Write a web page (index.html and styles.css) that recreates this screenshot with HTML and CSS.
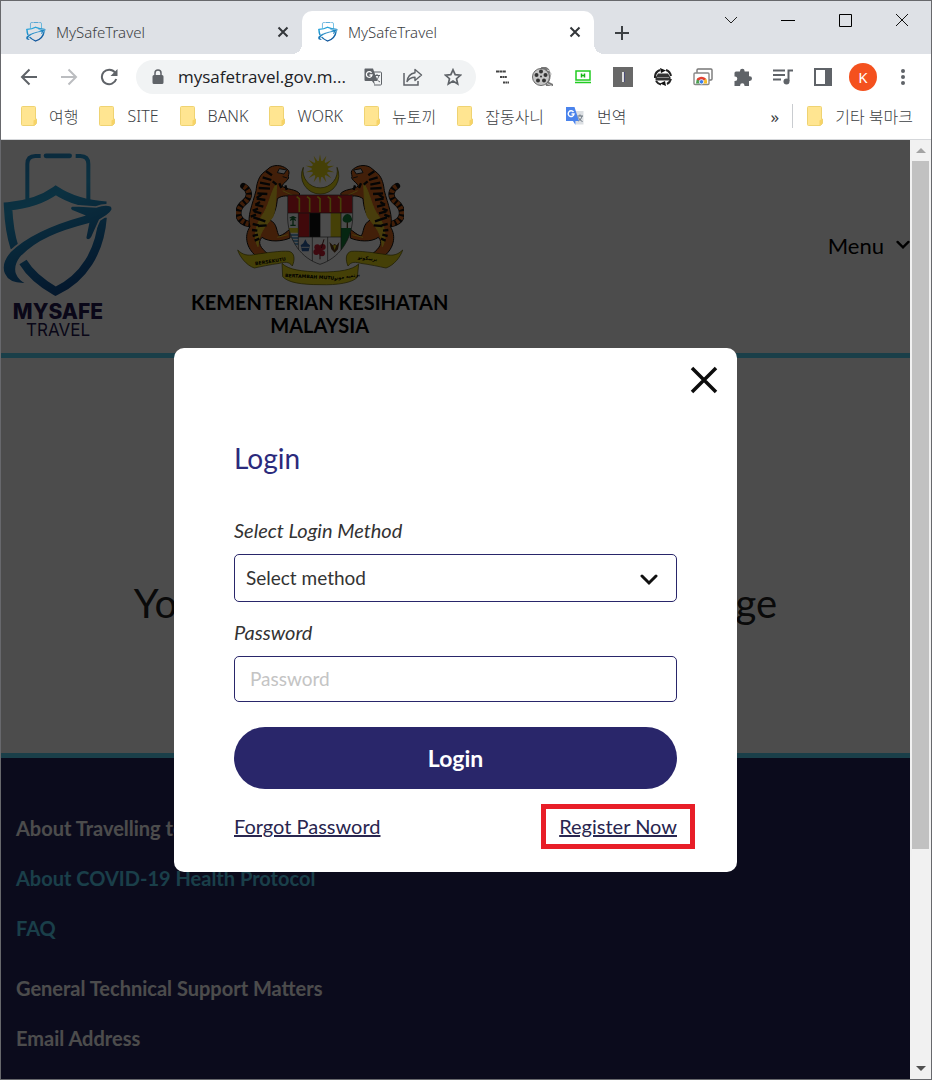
FILE: index.html
```html
<!DOCTYPE html>
<html lang="ko">
<head>
    <meta charset="UTF-8">
    <meta name="viewport" content="width=device-width, initial-scale=1.0">
    <title>MySafeTravel</title>
    <link rel="stylesheet" href="styles.css">
</head>
<body>
    <!-- shared symbols -->
    <svg class="symbols" aria-hidden="true">
        <defs>
            <linearGradient id="logoBlue" gradientUnits="userSpaceOnUse" x1="40" y1="60" x2="200" y2="460">
                <stop offset="0" stop-color="#2388c8"/>
                <stop offset="0.35" stop-color="#26a4da"/>
                <stop offset="1" stop-color="#0e4f96"/>
            </linearGradient>
        </defs>
        <symbol id="logo" viewBox="9 44 330 438" preserveAspectRatio="none">
            <g fill="none" stroke="url(#logoBlue)">
                <path stroke-width="12" d="M82 186V80q0-24 24-24h16M227 56h14q24 0 24 24v110"/>
                <path stroke-width="14" stroke-linecap="round" d="M138 55.500h71"/>
                <path stroke-width="25" d="M44 332C30 290 26 250 24 207c60-5 104-20 143-48 42 28 92 42 152 46M308 240c-8 104-58 184-141 222-42-24-74-48-98-88"/>
            </g>
            <path fill="url(#logoBlue)" stroke="#fff" stroke-width="5" d="M216 220c-8-5-8-15 8-15l64 4c16-6 32-8 44-4 10 8 4 20-12 30l-21 13-23 51c-5 12-20 12-19 0l8-39C180 282 110 308 62 360c-28 38-10 64 20 79-78 6-90-52-52-96 52-52 130-84 220-109z"/>
        </symbol>
        <symbol id="folder" viewBox="0 0 16 20">
            <path fill="#ffe591" stroke="#efd372" d="M1.500.5h12a1 1 0 0 1 1 1V13h1v4.500l-2 2h-12a1 1 0 0 1-1-1v-17a1 1 0 0 1 1-1z"/>
            <path fill="#f7d366" d="M12.500 14.500l2.500-1.500v4.500l-1.500 1.500h-1z"/>
        </symbol>
        <symbol id="close" viewBox="0 0 12 12">
            <path d="M1.500 1.500l9 9m0-9l-9 9" fill="none" stroke="#33363a" stroke-width="2"/>
        </symbol>
        <symbol id="chevron" viewBox="0 0 18 12">
            <path d="M2 2l7 7 7-7" fill="none" stroke="currentColor" stroke-width="3" stroke-linecap="round"/>
        </symbol>
    </svg>

    <div class="window">
        <div class="tab-strip">
            <div class="tab">
                <svg class="tab-icon"><use href="#logo"/></svg>
                <span class="tab-title">MySafeTravel</span>
                <button class="tab-close" aria-label="탭 닫기"><svg width="12" height="12"><use href="#close"/></svg></button>
            </div>
            <div class="tab tab-active">
                <svg class="tab-icon"><use href="#logo"/></svg>
                <span class="tab-title">MySafeTravel</span>
                <button class="tab-close" aria-label="탭 닫기"><svg width="12" height="12"><use href="#close"/></svg></button>
            </div>
            <button class="new-tab" aria-label="새 탭">
                <svg width="16" height="16" viewBox="0 0 16 16"><path d="M8 1v14M1 8h14" stroke="#3c4043" stroke-width="2"/></svg>
            </button>
            <div class="window-controls">
                <button aria-label="탭 검색"><svg width="14" height="14" viewBox="0 0 14 14"><path d="M1 4l6 6 6-6" fill="none" stroke="#222"/></svg></button>
                <button aria-label="최소화"><svg width="14" height="14" viewBox="0 0 14 14"><path d="M0 7.500h14" stroke="#000"/></svg></button>
                <button aria-label="최대화"><svg width="14" height="14" viewBox="0 0 14 14"><path d="M1.500 1.500h12v12h-12z" fill="none" stroke="#000"/></svg></button>
                <button aria-label="닫기"><svg width="14" height="14" viewBox="0 0 14 14"><path d="M1 1l12 12M13 1L1 13" fill="none" stroke="#111"/></svg></button>
            </div>
        </div>

        <div class="toolbar">
            <button class="tool" aria-label="뒤로"><svg width="18" height="18" viewBox="0 0 18 18"><path d="M17 9H2m7.500-7.500L2 9l7.500 7.500" fill="none" stroke="#5f6368" stroke-width="2"/></svg></button>
            <button class="tool" aria-label="앞으로"><svg width="18" height="18" viewBox="0 0 18 18"><path d="M1 9h15M8.500 1.500L16 9l-7.500 7.500" fill="none" stroke="#bbbdc0" stroke-width="2"/></svg></button>
            <button class="tool" aria-label="새로고침"><svg width="18" height="18" viewBox="0 0 18 18"><path d="M15 4.500A7.300 7.300 0 1 0 16.200 11" fill="none" stroke="#5f6368" stroke-width="2"/><path d="M17.500 1v7h-7z" fill="#5f6368"/></svg></button>

            <div class="omnibox">
                <svg width="12" height="16" viewBox="0 0 12 16"><path d="M2 6h8a1.500 1.500 0 0 1 1.500 1.500v6A1.500 1.500 0 0 1 10 15H2a1.500 1.500 0 0 1-1.500-1.500v-6A1.500 1.500 0 0 1 2 6z" fill="#5f6368"/><path d="M3 7V4a3 3 0 0 1 6 0v3" fill="none" stroke="#5f6368" stroke-width="1.500"/></svg>
                <input class="address" type="text" aria-label="주소" value="mysafetravel.gov.m...">
                <button class="tool" aria-label="번역">
                    <svg width="18" height="18" viewBox="0 0 18 18"><path d="M8 4h8.500a1 1 0 0 1 1 1v11a1 1 0 0 1-1 1H10" fill="none" stroke="#5f6368"/><path d="M1 .5h8L13.500 13H10l1 4-3-4H1.500a1 1 0 0 1-1-1V1z" fill="#5f6368"/><path d="M7.500 4.800A2.800 2.800 0 1 0 8 7H5.500" fill="none" stroke="#fff" stroke-width="1.300"/><path d="M10.500 7.500H16M13 6v1.500m2 0c-.5 2.500-2 4-3.500 5M11.500 9c1 2 2.500 4 4.500 5" fill="none" stroke="#5f6368"/></svg>
                </button>
                <button class="tool" aria-label="공유">
                    <svg width="20" height="18" viewBox="0 0 20 18"><path d="M1 5v12h14v-4" fill="none" stroke="#5f6368" stroke-width="1.500"/><path d="M12 1.500l6.500 5.500-6.500 5.500V9.300c-3.500 0-6 1.200-8 4.200.5-4.500 3.500-8 8-8.800z" fill="none" stroke="#5f6368" stroke-width="1.400" stroke-linejoin="round"/></svg>
                </button>
                <button class="tool" aria-label="북마크에 추가">
                    <svg width="18" height="18" viewBox="0 0 18 18"><path d="M9 1.800l2.200 4.900 5.300.5-4 3.500 1.200 5.200L9 13.100l-4.700 2.800 1.200-5.200-4-3.500 5.300-.5z" fill="none" stroke="#5f6368" stroke-width="1.700"/></svg>
                </button>
            </div>

            <button class="tool" aria-label="Enable right click">
                <svg width="16" height="16" viewBox="0 0 16 16"><g stroke="#444" stroke-width="2"><path d="M1 2.500h10" stroke-dasharray="3 .4"/><path d="M5 8h7" stroke-dasharray="2 .4"/><path d="M8 13.500h6" stroke-dasharray="2 .4"/></g></svg>
            </button>
            <button class="tool" aria-label="비디오">
                <svg width="22" height="22" viewBox="0 0 22 22"><path d="M9 1h5c5 2 6 9 3 15l4 2v2h-7z" fill="#777"/><path d="M15 4l3 1M17 8h3M17 12h2M14 17l6 3" stroke="#ccc"/><circle cx="9" cy="11" r="8.500" fill="#c5c5c5" stroke="#666"/><g fill="#333"><circle cx="9" cy="5.500" r="2"/><circle cx="4.500" cy="9" r="2"/><circle cx="6" cy="14.500" r="2"/><circle cx="12" cy="14.500" r="2"/><circle cx="13.500" cy="9" r="2"/><circle cx="9" cy="10.500" r="1"/></g></svg>
            </button>
            <button class="tool" aria-label="화면">
                <svg width="16" height="14" viewBox="0 0 16 14"><path d="M1 1h14v9H1zM0 12.500h16" fill="none" stroke="#22cc22" stroke-width="1.500"/><path d="M6.500 3.500v4m3-4v4m-3-2h3" stroke="#13b513" stroke-width="1.500"/></svg>
            </button>
            <button class="tool" aria-label="확장 프로그램 I">
                <svg width="20" height="20" viewBox="0 0 20 20"><path d="M0 0h20v20H0z" fill="#686868"/><path d="M10 5v10" stroke="#ddd" stroke-width="2"/><path d="M11.500 5v10" stroke="#4b4c78"/></svg>
            </button>
            <button class="tool" aria-label="회전">
                <svg width="18" height="18" viewBox="0 0 18 18"><path d="M1 10A8 8 0 0 1 6 2M12 2a8 8 0 0 1 5 6M17 11a8 8 0 0 1-4 5M7 16.500A8 8 0 0 1 2 13" fill="none" stroke="#222" stroke-width="2"/><path d="M6 0l6 2.500L7 5zM12 18l-6-2.500 5-2.500z" fill="#111"/><path d="M4 5.500h10l2.500 4v3h-15v-3z" fill="#333"/><path d="M3 9.500h12" stroke="#888"/></svg>
            </button>
            <button class="tool" aria-label="원격 데스크톱">
                <svg width="20" height="18" viewBox="0 0 20 18"><rect x="4" y="1" width="15" height="11" rx="1" fill="#fff" stroke="#777" stroke-width="1.400"/><rect x="1" y="5" width="15" height="11.500" rx="1" fill="#fff" stroke="#888" stroke-width="1.400"/><path d="M3 15.500a6 6 0 0 1 2-5.500l3.500 5.500z" fill="#4a9f4f"/><path d="M3.500 11.500a6 6 0 0 1 10 0l-5 2z" fill="#e34234"/><path d="M13 10.500a6 6 0 0 1 1 5H8.500z" fill="#f6bd27"/><circle cx="8.500" cy="13.800" r="2.200" fill="#397ded" stroke="#fff" stroke-width=".8"/></svg>
            </button>
            <button class="tool" aria-label="확장 프로그램">
                <svg width="20" height="20" viewBox="0 0 20 20"><path d="M3 4.500h4V4a2.300 2.300 0 0 1 4.600 0v.5h4.400v4.800h.7a2.300 2.300 0 0 1 0 4.600H16V19h-4.500v-.5a2.200 2.200 0 0 0-4.400 0v.5H1.500v-5H2a2.300 2.300 0 0 0 0-4.600h-.5V6A1.500 1.500 0 0 1 3 4.500z" fill="#5f6368"/></svg>
            </button>
            <button class="tool" aria-label="미디어 제어">
                <svg width="20" height="18" viewBox="0 0 20 18"><path d="M0 2.500h12M0 7h12M0 11.500h8M15.500 13V2.500H20" fill="none" stroke="#5f6368" stroke-width="2"/><circle cx="13.500" cy="13.500" r="3" fill="#5f6368"/></svg>
            </button>
            <button class="tool" aria-label="측면 패널">
                <svg width="18" height="18" viewBox="0 0 18 18"><path d="M1 1h16v16H1z" fill="#fff" stroke="#5f6368" stroke-width="2"/><path d="M11 0h7v18h-7z" fill="#5f6368"/></svg>
            </button>
            <button class="tool" aria-label="프로필"><span class="avatar">K</span></button>
            <button class="tool" aria-label="메뉴">
                <svg width="4" height="18" viewBox="0 0 4 18"><g fill="#5f6368"><circle cx="2" cy="3" r="2"/><circle cx="2" cy="9" r="2"/><circle cx="2" cy="15" r="2"/></g></svg>
            </button>
        </div>

        <nav class="bookmarks">
            <a href="#"><svg class="folder"><use href="#folder"/></svg>여행</a>
            <a href="#"><svg class="folder"><use href="#folder"/></svg>SITE</a>
            <a href="#"><svg class="folder"><use href="#folder"/></svg>BANK</a>
            <a href="#"><svg class="folder"><use href="#folder"/></svg>WORK</a>
            <a href="#"><svg class="folder"><use href="#folder"/></svg>뉴토끼</a>
            <a href="#"><svg class="folder"><use href="#folder"/></svg>잡동사니</a>
            <a href="#">
                <svg width="20" height="20" viewBox="0 0 20 20"><path d="M9 5h9.500v13.500H11z" fill="#dcdfe3"/><path d="M1 1h8.500L14 15h-3.500v4L8 15H1z" fill="#4a83ec"/><path d="M8.500 6A2.900 2.900 0 1 0 9 8H6.500" fill="none" stroke="#fff" stroke-width="1.400"/><path d="M12.500 10H18M15 8.500V10m2 0c-.5 2.500-2 4-3.500 5M13.500 11.500c1 2 2 3 4 4" fill="none" stroke="#69747f"/></svg>
                번역
            </a>
            <button class="more" aria-label="북마크 더보기">»</button>
            <a class="other" href="#"><svg class="folder"><use href="#folder"/></svg>기타 북마크</a>
        </nav>

        <div class="viewport">
            <div class="page">
                <header class="site-header">
                    <a class="brand" href="#">
                        <svg width="110" height="146"><use href="#logo"/></svg>
                        <strong>MYSAFE</strong>
                        <span>TRAVEL</span>
                    </a>
                    <div class="ministry">
                        <svg width="168" height="132" viewBox="160 40 504 396" aria-hidden="true">
                            <defs>
                                <path id="ray" d="M412 41l8 44-8 44-8-44z"/>
                                <clipPath id="shieldClip"><path d="M315 163h195v72c-4 66-42 118-98 136-56-18-94-70-97-136z"/></clipPath>
                                <g id="tiger">
                                    <path d="M198 250c-40-10-38-46-12-66 20-16 14-38-4-48" fill="none" stroke="#111" stroke-width="19" stroke-linecap="round"/>
                                    <path d="M198 250c-40-10-38-46-12-66 20-16 14-38-4-48" fill="none" stroke="#d8641c" stroke-width="15" stroke-dasharray="9 6"/>
                                    <path d="M240 98l22-18c18-10 42-6 56 10 4 10-4 14 0 22-6 12-16 14-20 24 14 12 42 8 54 24l-14 14c-20-12-40-10-54 0-2 26-8 46-22 64 24 12 18 36 28 48 14-4 22-14 32-20v26c-22 10-62 14-84-2-16 16-2 34 16 48l-36 6c-24-20-36-56-16-86-10-30 8-68 18-108 2-18 6-38 20-52z" fill="#dd6a1e" stroke="#111" stroke-width="3"/>
                                    <path d="M282 128c-20 30-22 70-46 100-18 30-24 64-10 90 2-40 20-60 44-88 8-18 10-50 12-102zM300 150l34 16M284 290l32-8" fill="#f0cd28" stroke="#f0cd28" stroke-width="3"/>
                                    <path d="M250 92l18 12m-28 6l26 8m-34 8l30 6m-34 10l34 2m-38 14l30 2m-32 14l26 4m-30 14l24 6m-28 14l22 6m-24 12l18 6m-20 14l18 4m-20 14l16 2m-14 16l16-4m-10 18l14-6m40-172l12 10m8-4l6 14m12-8l4 14m-90 24l14-10m-18 30l14-8m-22 26l16-6m-22 24l16-6m4 12l24 8m-22 14l26-2" fill="none" stroke="#111" stroke-width="7"/>
                                    <path d="M290 84l22 4-8 12-20-4zM300 108l14 4" fill="#eee" stroke="#222" stroke-width="3"/>
                                </g>
                            </defs>
                            <path fill="#e8d619" stroke="#555200" stroke-width="2" d="M362 80a56 56 0 1 0 101 0 51.500 51.500 0 1 1-101 0z"/>
                            <g fill="#e8d619">
                                <use href="#ray"/>
                                <use href="#ray" transform="rotate(25.700 412 85)"/>
                                <use href="#ray" transform="rotate(51.400 412 85)"/>
                                <use href="#ray" transform="rotate(77.100 412 85)"/>
                                <use href="#ray" transform="rotate(102.900 412 85)"/>
                                <use href="#ray" transform="rotate(128.600 412 85)"/>
                                <use href="#ray" transform="rotate(154.300 412 85)"/>
                                <circle cx="412" cy="85" r="25"/>
                            </g>
                            <use href="#tiger"/>
                            <use href="#tiger" transform="translate(825 0) scale(-1 1)"/>
                            <g clip-path="url(#shieldClip)">
                                <path fill="#fff" d="M310 160h205v215H310z"/>
                                <path fill="#d51f26" d="M315 163h195v54H315zM347 217h33v72h-33z"/>
                                <path fill="#111" d="M380 217h33v72h-33z"/>
                                <path fill="#e8d619" d="M444 217h31v72h-31zM315 262h32v14h-32z"/>
                                <path fill="#16803a" d="M475 262h40v80h-40z"/>
                                <path stroke="#3c8fc8" stroke-width="4" d="M315 283h32m-32 9h32m-32 9h32m-32 9h32"/>
                                <path stroke="#176b32" stroke-width="4" fill="none" d="M331 228v26m-10-22l10-4 10 4m-18 8l8-10 8 10m-16 14h16"/>
                                <path stroke="#5b3b18" stroke-width="4" d="M494 240v22"/>
                                <path fill="#16803a" d="M494 220c10 0 12 10 14 14 4 14-30 16-28 2 0-6 6-16 14-16z"/>
                                <path stroke="#e8d619" stroke-width="5" fill="none" d="M342 168l8 6v40m23-46l8 6v40m23-46l8 6v40m23-46l8 6v40m23-46l8 6v40"/>
                                <path stroke="#333" stroke-width="2" fill="none" d="M315 217h195M347 217v120M475 217v120M347 289h128M389 289v80M435 289v80"/>
                                <path fill="#2f62a8" d="M368 296l6 12 8 6-4 18h-20l-4-18 8-6z"/>
                                <path stroke="#e9edf5" stroke-width="3" d="M356 320h24"/>
                                <g fill="#cd1f35"><circle cx="404" cy="320" r="9"/><circle cx="420" cy="319" r="9"/><circle cx="401" cy="334" r="9"/><circle cx="418" cy="338" r="9"/><circle cx="411" cy="328" r="9"/></g>
                                <path stroke="#5b1a1a" stroke-width="3" d="M416 322l8-26m-12 46v14"/>
                                <path fill="#5b3b18" d="M440 304l10 10 6-4 6 4 8-10-4 22-10 10-10-10z"/>
                                <path fill="#e8d619" d="M451 314h10l-5 14z"/>
                            </g>
                            <path fill="none" stroke="#333" stroke-width="2" d="M315 163h195v72c-4 66-42 118-98 136-56-18-94-70-97-136z"/>
                            <g fill="#e8d619" stroke="#555200" stroke-width="2">
                                <path d="M165 328c14 14 30 18 48 14 40-6 80-12 106-10 18 4 18 26 10 44-10-14-24-12-38-8-30 4-56 10-76 14-24-8-44-34-50-54z"/>
                                <path d="M660 328c-14 14-30 18-48 14-40-6-80-12-106-10-18 4-18 26-10 44 10-14 24-12 38-8 30 4 56 10 76 14 24-8 44-34 50-54z"/>
                                <path d="M298 368c20 20 60 24 114 26 60 0 96-6 116-24l-4 40c-14 16-60 24-112 22-56 0-96-6-112-24z"/>
                            </g>
                            <text class="motto" transform="translate(218 374) rotate(-9)">BERSEKUTU</text>
                            <text class="motto" transform="translate(307 409) rotate(3)">BERTAMBAH MUTU</text>
                            <text class="motto" transform="translate(525 354) rotate(7)">برسكوتو</text>
                            <text class="motto" transform="translate(454 418) rotate(-9)">برتمبه موتو</text>
                        </svg>
                        <p>KEMENTERIAN KESIHATAN<br>MALAYSIA</p>
                    </div>
                    <button class="menu-btn">Menu <svg width="14" height="10"><use href="#chevron"/></svg></button>
                </header>

                <main class="notice">
                    <h1>You need to login to access this page</h1>
                </main>

                <footer class="site-footer">
                    <h2>About Travelling to Malaysia</h2>
                    <a href="#">About COVID-19 Health Protocol</a>
                    <a href="#">FAQ</a>
                    <h2 class="support">General Technical Support Matters</h2>
                    <h2>Email Address</h2>
                </footer>

                <div class="overlay">
                    <form class="modal">
                        <button class="modal-close" type="button" aria-label="Close">
                            <svg width="28" height="28" viewBox="0 0 28 28"><path d="M2 2l24 24M26 2L2 26" stroke="#0c0c0c" stroke-width="3.500"/></svg>
                        </button>
                        <h2 class="modal-title">Login</h2>
                        <label for="method">Select Login Method</label>
                        <div class="select-wrap">
                            <select id="method">
                                <option>Select method</option>
                            </select>
                            <svg width="18" height="12"><use href="#chevron"/></svg>
                        </div>
                        <label for="password">Password</label>
                        <input class="password" id="password" type="password" placeholder="Password">
                        <button class="login-btn" type="submit">Login</button>
                        <div class="modal-links">
                            <a href="#">Forgot Password</a>
                            <a class="register" href="#">Register Now</a>
                        </div>
                    </form>
                </div>
            </div>

            <div class="scrollbar" aria-hidden="true">
                <span class="arrow arrow-up"></span>
                <span class="thumb"></span>
                <span class="track"></span>
                <span class="arrow arrow-down"></span>
            </div>
        </div>
    </div>
</body>
</html>
```
FILE: styles.css
```css
* {
    margin: 0;
    padding: 0;
    box-sizing: border-box;
}

body {
    font-family: 'Noto Sans', 'Noto Sans CJK KR', sans-serif;
    color: #3c4043;
}

button {
    border: none;
    background: none;
    font-family: inherit;
    color: inherit;
    cursor: pointer;
}

a {
    color: inherit;
    text-decoration: none;
}

svg {
    display: block;
    flex-shrink: 0;
}

.symbols {
    position: absolute;
    width: 0;
    height: 0;
}

.window {
    display: flex;
    flex-direction: column;
    min-height: 100vh;
    border: 1px solid #67686c;
    background: white;
}

/* tabs */
.tab-strip {
    display: flex;
    height: 53px;
    padding-left: 9px;
    background: #dee1e6;
}

.tab {
    position: relative;
    display: flex;
    align-items: center;
    flex: 0 1 292px;
    margin-top: 10px;
    padding: 0 10px 2px 16px;
    border-radius: 10px 10px 0 0;
    font-size: 15px;
    font-weight: 300;
}

.tab-active {
    background: white;
}

.tab-active::before,
.tab-active::after {
    content: '';
    position: absolute;
    bottom: 0;
    width: 10px;
    height: 10px;
}

.tab-active::before {
    left: -10px;
    background: radial-gradient(circle at 0 0, #dee1e6 10px, white 10px);
}

.tab-active::after {
    right: -10px;
    background: radial-gradient(circle at 100% 0, #dee1e6 10px, white 10px);
}

.tab-icon {
    width: 20px;
    height: 20px;
    margin-right: 10px;
}

.tab-title {
    flex: 1;
}

.tab-close {
    display: grid;
    place-items: center;
    width: 18px;
    height: 18px;
}

.new-tab {
    display: grid;
    place-items: center;
    width: 36px;
    margin: 10px 0 0 10px;
}

.window-controls {
    display: flex;
    height: 37px;
    margin-left: auto;
    margin-right: 1px;
}

.window-controls button {
    display: grid;
    place-items: center;
    width: 57px;
}

/* toolbar */
.toolbar {
    display: flex;
    align-items: center;
    height: 45px;
    padding: 0 8px;
}

.tool {
    display: grid;
    place-items: center;
    flex: 0 0 40px;
    height: 34px;
}

.omnibox {
    display: flex;
    align-items: center;
    flex: 1;
    min-width: 0;
    height: 34px;
    margin: 0 7px;
    padding: 0 3px 0 16px;
    border-radius: 17px;
    background: #f1f3f4;
}

.address {
    flex: 1;
    min-width: 0;
    margin-left: 14px;
    border: none;
    outline: none;
    background: none;
    font-family: 'Open Sans', sans-serif;
    font-size: 17px;
    color: #202124;
}

.avatar {
    width: 28px;
    border-radius: 50%;
    background: #f4511e;
    color: white;
    font-size: 15px;
    line-height: 28px;
}

/* bookmarks */
.bookmarks {
    display: flex;
    align-items: center;
    gap: 21px;
    height: 41px;
    padding: 0 18px 6px 20px;
    border-bottom: 1px solid #d5d7da;
    font-size: 16px;
    font-weight: 300;
    white-space: nowrap;
}

.bookmarks a {
    display: flex;
    align-items: center;
    gap: 12px;
}

.folder {
    width: 16px;
    height: 20px;
}

.more {
    margin-left: auto;
    margin-right: -8px;
    font-size: 17px;
}

.bookmarks .other {
    padding-left: 14px;
    border-left: 1px solid #c9ccd0;
}

/* web page */
.viewport {
    display: flex;
    flex: 1;
}

.page {
    position: relative;
    display: flex;
    flex-direction: column;
    flex: 1;
    font-family: Lato, 'Liberation Sans', sans-serif;
    background: white;
}

.site-header {
    display: flex;
    align-items: center;
    gap: 78px;
    height: 218px;
    padding: 0 0 3px 2px;
    border-bottom: 5px solid #57d2f5;
    color: #000;
}

.brand {
    display: flex;
    flex-direction: column;
    align-items: center;
    font-family: Inter, sans-serif;
    color: #241852;
}

.brand strong {
    margin-top: 4px;
    font-size: 21px;
    font-weight: 800;
    line-height: 20px;
}

.brand span {
    font-size: 17px;
    line-height: 16px;
}

.ministry {
    display: flex;
    flex-direction: column;
    align-items: center;
    gap: 5px;
    font-size: 20px;
    font-weight: 700;
    line-height: 23px;
    text-align: center;
}

.motto {
    font-family: 'DejaVu Sans', sans-serif;
    font-size: 14px;
    font-weight: bold;
}

.menu-btn {
    display: flex;
    align-items: center;
    gap: 12px;
    margin-left: auto;
    font-size: 22px;
}

.notice {
    display: grid;
    place-items: center;
    height: 395px;
    padding-top: 94px;
    color: #222;
}

.notice h1 {
    font-size: 40px;
    font-weight: normal;
    white-space: nowrap;
}

.site-footer {
    flex: 1;
    padding: 45px 15px 0;
    border-top: 5px solid #57d2f5;
    background: #262560;
    color: white;
    font-size: 20px;
    line-height: 50px;
}

.site-footer h2 {
    font-size: 20px;
}

.site-footer a {
    display: block;
    color: #57d2f5;
    font-weight: bold;
}

.site-footer .support {
    margin-top: 10px;
}

/* login modal */
.overlay {
    position: absolute;
    inset: 0;
    display: flex;
    align-items: center;
    justify-content: center;
    background: rgba(0, 0, 0, 0.7);
}

.modal {
    display: flex;
    flex-direction: column;
    width: 563px;
    max-width: 90%;
    padding: 18px 60px 23px;
    border-radius: 10px;
    background: white;
    color: #333;
}

.modal-close {
    align-self: flex-end;
    width: 28px;
    margin-right: -41px;
}

.modal-title {
    margin: 47px 0 39px;
    color: #2b2a7c;
    font-size: 28px;
    font-weight: normal;
    line-height: 34px;
}

.modal label {
    margin-bottom: 8px;
    font-size: 20px;
    font-style: italic;
    line-height: 32px;
}

.select-wrap {
    display: grid;
    align-items: center;
    margin-bottom: 14px;
    color: #111;
}

.select-wrap select,
.select-wrap svg {
    grid-area: 1 / 1;
}

.select-wrap svg {
    justify-self: end;
    margin-top: 4px;
    margin-right: 19px;
    pointer-events: none;
}

.select-wrap select,
.password {
    width: 100%;
    border: 1px solid #29266a;
    border-radius: 5px;
    background: white;
    color: #333;
    font-family: inherit;
    font-size: 19px;
}

.select-wrap select {
    height: 48px;
    padding-left: 11px;
    appearance: none;
}

.password {
    height: 46px;
    padding: 0 15px;
}

.password::placeholder {
    color: #c4c4c4;
}

.login-btn {
    height: 62px;
    margin-top: 25px;
    border-radius: 31px;
    background: #29266a;
    color: white;
    font-size: 23px;
    font-weight: bold;
}

.modal-links {
    display: flex;
    align-items: center;
    justify-content: space-between;
    margin: 15px -18px 0 0;
    color: #29264f;
    font-size: 20px;
}

.modal-links a {
    text-decoration: underline;
}

.modal-links .register {
    padding: 0 13px;
    border: 5px solid #e81e28;
    line-height: 35px;
}

/* scrollbar */
.scrollbar {
    display: flex;
    flex-direction: column;
    align-items: center;
    width: 21px;
    background: #f1f1f1;
}

.arrow {
    display: grid;
    place-items: center;
    height: 21px;
}

.arrow::before {
    content: '';
    border: 5px solid transparent;
}

.arrow-up::before {
    border-top: none;
    border-bottom-color: #a3a3a3;
}

.arrow-down::before {
    border-bottom: none;
    border-top-color: #505050;
}

.thumb {
    flex: 23;
    width: 17px;
    background: #c1c1c1;
}

.track {
    flex: 7;
}
```
